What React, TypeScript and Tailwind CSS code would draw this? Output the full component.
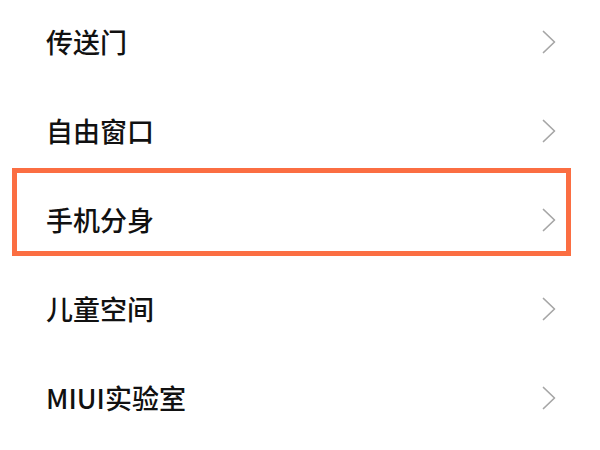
const items = ["传送门", "自由窗口", "手机分身", "儿童空间", "MIUI实验室"];

function Chevron() {
  return (
    <svg width="14" height="24" viewBox="0 0 14 24" fill="none" className="text-[#a6a6a6]">
      <polyline points="1.5,1.5 12.5,12 1.5,22.5" stroke="currentColor" strokeWidth="1.7" strokeLinecap="round" strokeLinejoin="round" />
    </svg>
  );
}

export default function App() {
  return (
    <div className="relative w-[600px] h-[450px] overflow-hidden bg-white">
      <div className="flex flex-col mt-[-3px]">
        {items.map((label) => (
          <div key={label} className="flex h-[89px] items-center justify-between pl-[46px] pr-[44px]">
            <span
              className="text-[27px] font-medium text-[#111] leading-none"
              style={{ fontFamily: '"Noto Sans CJK SC", "Noto Sans", sans-serif' }}
            >
              {label}
            </span>
            <Chevron />
          </div>
        ))}
      </div>
      {/* highlight around the selected row */}
      <div className="absolute left-[12px] top-[168px] h-[88px] w-[559px] border-[5px] border-[#fb6e42]" />
    </div>
  );
}
